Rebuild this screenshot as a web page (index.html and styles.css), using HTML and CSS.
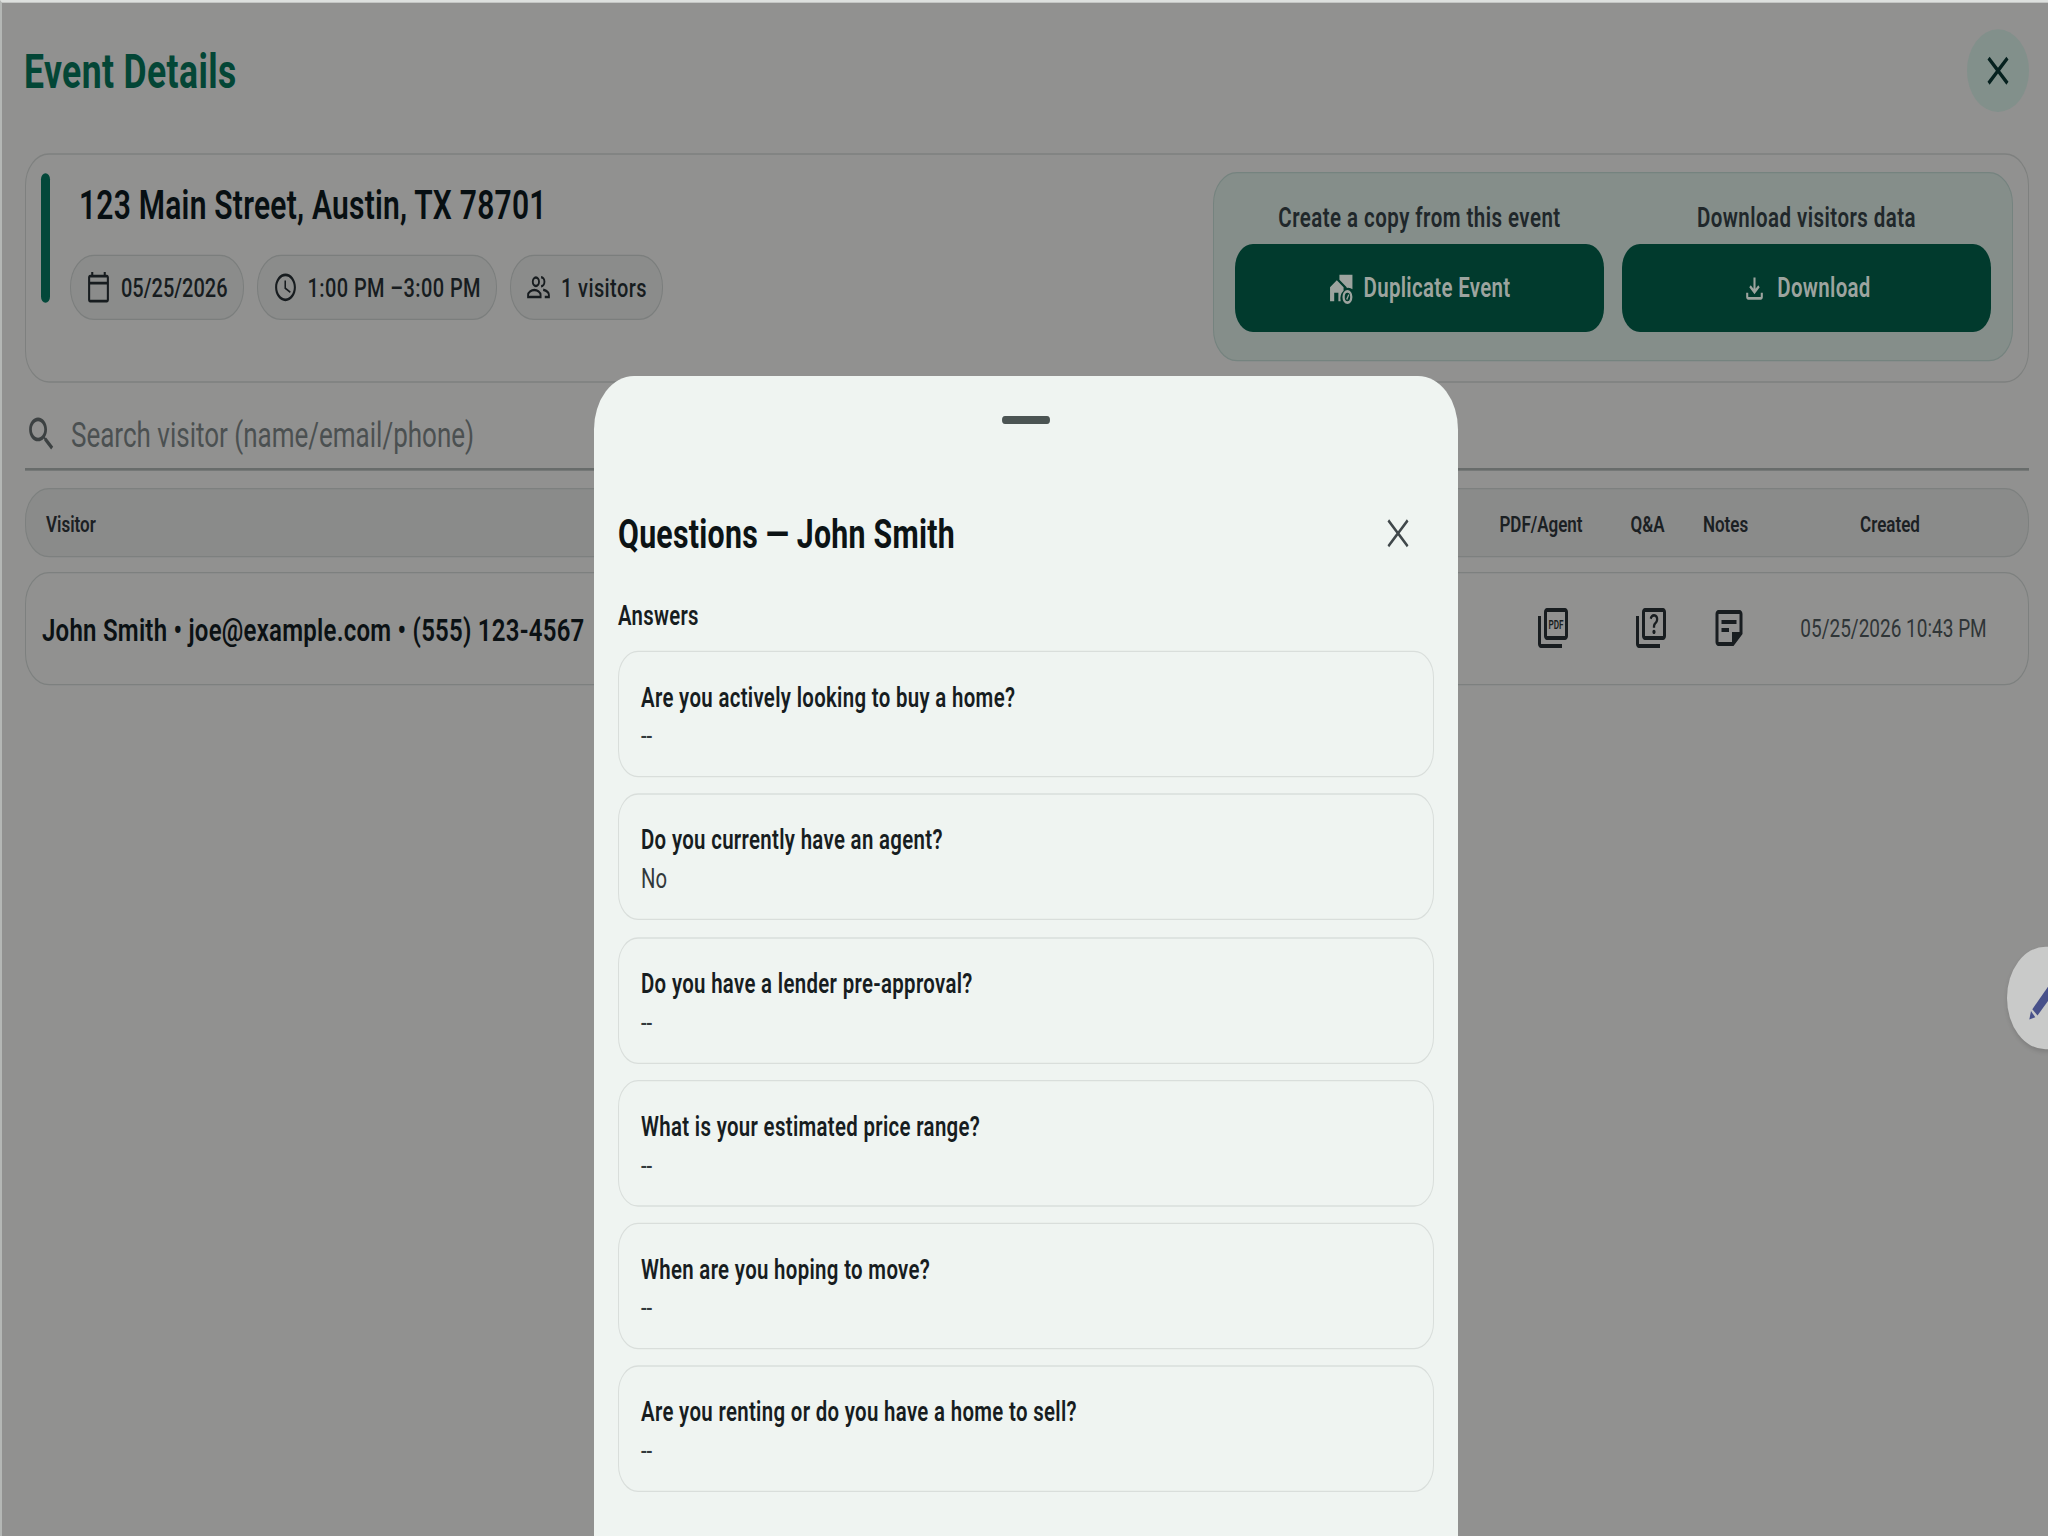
FILE: index.html
```html
<!DOCTYPE html>
<html lang="en">
<head>
  <meta charset="UTF-8">
  <title>Event Details</title>
  <link rel="stylesheet" href="styles.css">
</head>
<body>
  <div class="screen">
    <header class="topbar">
      <h1>Event Details</h1>
      <button class="close-round" aria-label="Close">
        <svg class="icon-lg" viewBox="0 0 24 24"><path d="M19 6.41 17.59 5 12 10.59 6.41 5 5 6.41 10.59 12 5 17.59 6.41 19 12 13.41 17.59 19 19 17.59 13.41 12z"/></svg>
      </button>
    </header>

    <section class="event-card">
      <div class="accent"></div>
      <div class="event-info">
        <h2>123 Main Street, Austin, TX 78701</h2>
        <div class="chips">
          <span class="chip">
            <svg viewBox="0 0 24 24"><path d="M20 3h-1V1h-2v2H7V1H5v2H4c-1.1 0-2 .9-2 2v16c0 1.1.9 2 2 2h16c1.1 0 2-.9 2-2V5c0-1.1-.9-2-2-2zm0 18H4V10h16v11zm0-13H4V5h16v3z"/></svg>
            <span>05/25/2026</span>
          </span>
          <span class="chip">
            <svg viewBox="0 0 24 24"><path d="M11.99 2C6.47 2 2 6.48 2 12s4.47 10 9.99 10C17.52 22 22 17.52 22 12S17.52 2 11.99 2zM12 20c-4.42 0-8-3.58-8-8s3.58-8 8-8 8 3.58 8 8-3.58 8-8 8zm.5-13H11v6l5.25 3.15.75-1.23-4.5-2.67z"/></svg>
            <span>1:00 PM –3:00 PM</span>
          </span>
          <span class="chip">
            <svg class="line" viewBox="0 0 24 24"><circle cx="9.500" cy="8" r="3"/><path d="M2 19v-1.500C2 15.500 5 14 8 14s6 1.500 6 3.500V19zM14.500 4.800a3.200 3.200 0 0 1 0 6.400M16.500 13.800c3 .6 5.500 1.800 5.500 3.700V19h-4"/></svg>
            <span>1 visitors</span>
          </span>
        </div>
      </div>
      <div class="actions">
        <div class="action">
          <p>Create a copy from this event</p>
          <button class="btn">
            <svg viewBox="0 0 24 24"><path d="M1 11v10h4v-6h4v6h2.200a7 7 0 0 1 2.800-7.500V11L7.500 6z"/><path d="M10 2v3.500l7 5.500v.5a7 7 0 0 1 5.500 1V2z"/><path fill-rule="evenodd" d="M17.700 13a4.800 5 0 1 0 0 10 4.800 5 0 0 0 0-10zm0 2a2.600 3 0 1 1 0 6 2.600 3 0 0 1 0-6z"/><path d="M16.500 19.500l2-3.500 1 .6-2 3.500z"/></svg>
            <span>Duplicate Event</span>
          </button>
        </div>
        <div class="action">
          <p>Download visitors data</p>
          <button class="btn">
            <svg viewBox="0 0 24 24"><path d="M12 16 7 11l1.400-1.450L11 12.150V4h2v8.150l2.600-2.600L17 11zM6 20q-.825 0-1.412-.587T4 18v-3h2v3h12v-3h2v3q0 .825-.587 1.413T18 20z"/></svg>
            <span>Download</span>
          </button>
        </div>
      </div>
    </section>

    <div class="search">
      <svg viewBox="0 0 24 24"><path d="M15.500 14h-.79l-.28-.27C15.410 12.590 16 11.110 16 9.500 16 5.910 13.090 3 9.500 3S3 5.910 3 9.500 5.910 16 9.500 16c1.610 0 3.090-.59 4.230-1.570l.27.28v.79l5 4.990L20.490 19l-4.990-5zm-6 0C7.010 14 5 11.990 5 9.500S7.010 5 9.500 5 14 7.010 14 9.500 11.990 14 9.500 14z"/></svg>
      <span>Search visitor (name/email/phone)</span>
    </div>

    <div class="row head">
      <span class="name">Visitor</span>
      <span>PDF/Agent</span>
      <span>Q&amp;A</span>
      <span>Notes</span>
      <span>Created</span>
    </div>

    <div class="row visitor">
      <span class="name">John Smith • joe@example.com • (555) 123-4567</span>
      <span class="cell-pdf">
        <svg class="icon-lg" viewBox="0 0 24 24"><path d="M20 2H8c-1.100 0-2 .9-2 2v12c0 1.100.9 2 2 2h12c1.100 0 2-.9 2-2V4c0-1.100-.9-2-2-2zm0 14H8V4h12v12zM4 6H2v14c0 1.100.9 2 2 2h14v-2H4V6z"/><text class="pdf-label" x="14" y="12.500" textLength="10" lengthAdjust="spacingAndGlyphs">PDF</text></svg>
      </span>
      <span class="cell-qa">
        <svg class="icon-lg" viewBox="0 0 24 24"><path d="M4 6H2v14c0 1.100.9 2 2 2h14v-2H4V6zm16-4H8c-1.100 0-2 .9-2 2v12c0 1.100.9 2 2 2h12c1.100 0 2-.9 2-2V4c0-1.100-.9-2-2-2zm0 14H8V4h12v12zm-6.490-5.840c.41-.73 1.180-1.160 1.630-1.800.48-.68.210-1.940-1.140-1.940-.88 0-1.320.67-1.500 1.230l-1.370-.57C11.510 5.960 12.520 5 13.990 5c1.230 0 2.080.56 2.510 1.260.37.6.58 1.730.01 2.570-.63.93-1.230 1.210-1.560 1.810-.13.24-.18.4-.18 1.180h-1.520c.01-.41-.06-1.080.26-1.660zm-.56 3.790c0-.59.47-1.040 1.050-1.040.59 0 1.040.45 1.040 1.040 0 .58-.44 1.050-1.040 1.050-.58 0-1.050-.47-1.050-1.050z"/></svg>
      </span>
      <span class="cell-notes">
        <svg class="icon-lg" viewBox="0 0 24 24"><path d="M19 3H5c-1.100 0-2 .9-2 2v14c0 1.100.9 2 2 2h10l6-6V5c0-1.100-.9-2-2-2zm0 11h-5v5H5V5h14v9zM7 8h10v2H7V8zm0 4h5v2H7v-2z"/></svg>
      </span>
      <span class="created">05/25/2026 10:43 PM</span>
    </div>
  </div>

  <div class="fab">
    <svg viewBox="0 0 40 40"><path d="M4.300 32 28 6.500l5.500 5L9.500 36.700z"/><path d="M3 33.300 7.300 38l-6 1.700z"/></svg>
  </div>

  <div class="sheet">
    <div class="handle"></div>
    <div class="sheet-header">
      <h2>Questions — John Smith</h2>
      <svg class="icon-lg" viewBox="0 0 24 24"><path d="M19 6.100 17.900 5 12 10.900 6.100 5 5 6.100 10.900 12 5 17.900 6.100 19 12 13.100 17.900 19 19 17.900 13.100 12z"/></svg>
    </div>
    <h3>Answers</h3>
    <div class="qa">
      <h4>Are you actively looking to buy a home?</h4>
      <p>--</p>
    </div>
    <div class="qa">
      <h4>Do you currently have an agent?</h4>
      <p>No</p>
    </div>
    <div class="qa">
      <h4>Do you have a lender pre-approval?</h4>
      <p>--</p>
    </div>
    <div class="qa">
      <h4>What is your estimated price range?</h4>
      <p>--</p>
    </div>
    <div class="qa">
      <h4>When are you hoping to move?</h4>
      <p>--</p>
    </div>
    <div class="qa">
      <h4>Are you renting or do you have a home to sell?</h4>
      <p>--</p>
    </div>
  </div>
</body>
</html>
```
FILE: styles.css
```css
* {
  box-sizing: border-box;
  margin: 0;
  padding: 0;
}

html {
  background: #919190;
  overflow: hidden;
}

/* 16:9 layout shown on a 4:3 screen */
body {
  position: relative;
  width: 2048px;
  height: 1152px;
  transform: scaleY(1.33333);
  transform-origin: 0 0;
  overflow: hidden;
  background: #919190;
  font-family: Roboto, "Liberation Sans", sans-serif;
  color: #12181a;
}

svg {
  display: block;
  fill: currentColor;
  flex: none;
}

button {
  border: none;
  font-family: inherit;
}

.icon-lg {
  width: 36px;
  height: 36px;
}

.line {
  fill: none;
  stroke: currentColor;
  stroke-width: 1.8;
}

.screen {
  height: 1152px;
  border-top: 2px solid #dde0de;
  border-left: 2px solid #b4b7b5;
  padding: 20px 19px 0 23px;
}

.topbar {
  display: flex;
  justify-content: space-between;
  align-items: center;
  height: 62px;
}

.topbar h1 {
  margin-left: -1px;
  padding-top: 1px;
  font-size: 35.5px;
  font-weight: 700;
  letter-spacing: 0.4px;
  color: #034636;
}

.close-round {
  display: flex;
  align-items: center;
  justify-content: center;
  width: 62px;
  height: 62px;
  border-radius: 50%;
  background: #82908b;
  color: #06211f;
}

/* Event summary */
.event-card {
  display: flex;
  height: 172px;
  margin-top: 31px;
  padding: 13px 15px;
  border: 1px solid #7e807f;
  border-radius: 24px;
}

.accent {
  width: 9px;
  height: 97px;
  margin-top: 1px;
  border-radius: 5px;
  background: #03483a;
}

.event-info {
  flex: 1;
  padding-left: 20px;
}

.event-info h2 {
  margin: 6px 0 0 9px;
  padding-top: 1px;
  font-size: 30px;
  font-weight: 600;
  letter-spacing: 0.23px;
  line-height: 36px;
  color: #070f12;
}

.chips {
  display: flex;
  gap: 13px;
  margin-top: 19px;
}

.chip {
  display: flex;
  align-items: center;
  gap: 10px;
  height: 49px;
  padding: 0 15px;
  border: 1px solid #7b7e7d;
  border-radius: 24px;
  background: #8b8c8b;
  font-size: 20px;
  font-weight: 500;
  color: #171c1f;
}

.chip + .chip {
  letter-spacing: 0.4px;
}

.chip svg {
  width: 25px;
  height: 25px;
}

.actions {
  display: flex;
  gap: 18px;
  width: 800px;
  height: 142px;
  padding: 14px 21px;
  border: 1px solid #75837f;
  border-radius: 24px;
  background: #858e8a;
}

.action {
  flex: 1;
}

.action p {
  line-height: 39px;
  text-align: center;
  font-size: 20.5px;
  font-weight: 600;
  letter-spacing: 0.45px;
  color: #20272a;
}

.btn {
  display: flex;
  align-items: center;
  justify-content: center;
  gap: 10px;
  width: 100%;
  height: 66px;
  border-radius: 18px;
  background: #013a2d;
  font-size: 20.5px;
  font-weight: 600;
  letter-spacing: 0.3px;
  color: #9da49f;
}

.btn svg {
  width: 25px;
  height: 25px;
}

/* Search */
.search {
  display: flex;
  align-items: center;
  height: 54px;
  margin-top: 12px;
  border-bottom: 2px solid #686c6b;
  font-size: 26px;
  color: #4b5051;
}

.search span {
  padding-top: 2px;
}

.search svg {
  width: 33px;
  height: 33px;
  margin-right: 13px;
  color: #3c4142;
}

/* Visitors table */
.row {
  display: grid;
  grid-template-columns: 1fr 150px 63px 93px 236px;
  align-items: center;
  justify-items: center;
  padding-right: 20px;
  border: 1px solid #7d807f;
  border-radius: 24px;
}

.row .name {
  justify-self: start;
}

.head {
  height: 52px;
  margin-top: 13px;
  padding-top: 1px;
  padding-left: 20px;
  background: #8a8b8a;
  font-size: 17px;
  font-weight: 600;
  color: #1b2023;
}

.visitor {
  height: 85px;
  margin-top: 11px;
  padding-left: 16px;
  font-size: 24px;
  font-weight: 600;
  color: #0b1114;
}

.visitor .name {
  padding-top: 3px;
  letter-spacing: 0.24px;
}

.cell-pdf {
  padding: 0 0 2px 23px;
}

.cell-qa {
  padding: 0 0 2px 7px;
}

.cell-notes {
  padding: 0 0 2px 6px;
}

.visitor svg {
  color: #181d20;
}

.created {
  padding-left: 7px;
  font-size: 19px;
  font-weight: 400;
  color: #2f3537;
}

.pdf-label {
  font-size: 6.3px;
  font-weight: 600;
  text-anchor: middle;
}

/* Edit button, partly off screen */
.fab {
  position: absolute;
  left: 2007px;
  top: 710px;
  width: 77px;
  height: 77px;
  padding: 15px 0 0 21px;
  border-radius: 50%;
  background: #c9cac9;
  box-shadow: 0 2px 4px rgba(0, 0, 0, 0.12);
  color: #48518a;
}

.fab svg {
  width: 40px;
  height: 40px;
}

/* Bottom sheet */
.sheet {
  position: absolute;
  left: 594px;
  top: 281.5px;
  width: 864px;
  height: 871px;
  padding: 30px 24px 0;
  border-radius: 40px 40px 0 0;
  background: #eff4f1;
}

.handle {
  width: 48px;
  height: 6px;
  margin: 0 auto;
  border-radius: 3px;
  background: #4b5453;
}

.sheet-header {
  display: flex;
  align-items: center;
  justify-content: space-between;
  height: 40px;
  margin-top: 62.5px;
  padding-right: 18px;
}

.sheet-header h2 {
  font-size: 30.3px;
  font-weight: 700;
  letter-spacing: 0.25px;
  color: #0c1315;
}

.sheet-header svg {
  color: #40484b;
}

.sheet h3 {
  margin: 28.5px 0 13.5px;
  font-size: 20.3px;
  font-weight: 600;
  letter-spacing: 0.3px;
  line-height: 26px;
  color: #171d1f;
}

.qa {
  height: 95px;
  margin-bottom: 12.25px;
  padding: 20px 22px;
  border: 1px solid #d9dedb;
  border-radius: 20px;
}

.qa h4 {
  font-size: 20.4px;
  font-weight: 600;
  letter-spacing: 0.33px;
  line-height: 29px;
  color: #171d1f;
}

.qa p {
  font-size: 20.3px;
  line-height: 29px;
  color: #32393b;
}
```
